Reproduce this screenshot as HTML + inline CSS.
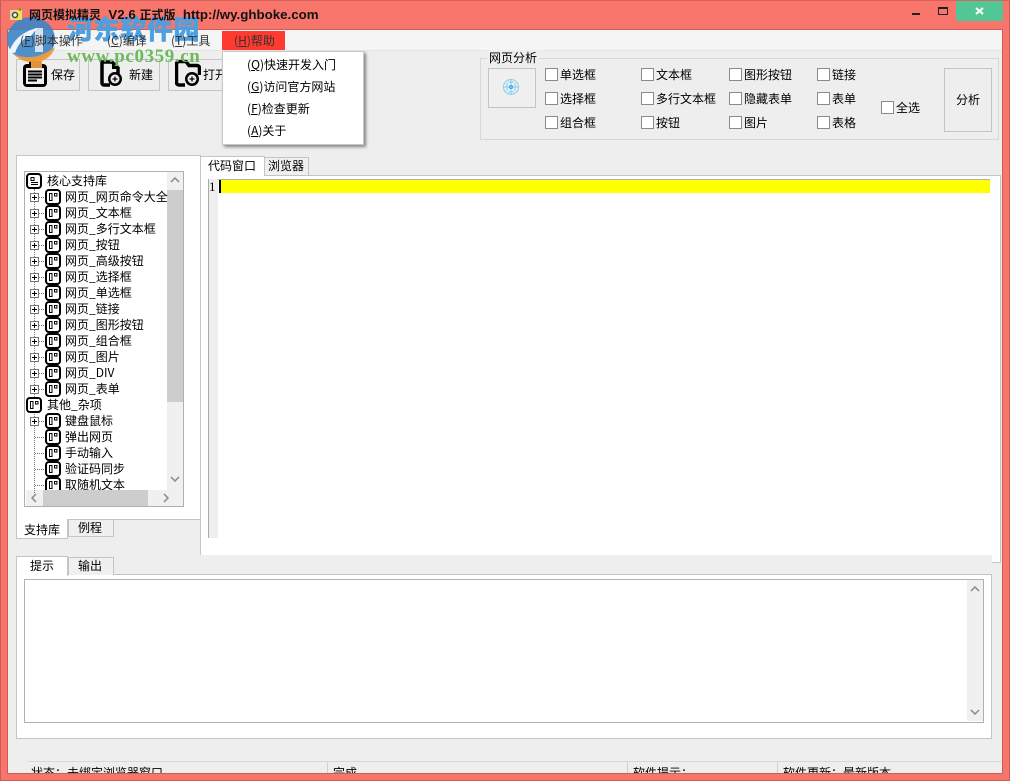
<!DOCTYPE html>
<html lang="zh"><head><meta charset="utf-8"><style>
html,body{margin:0;padding:0;width:1010px;height:781px;overflow:hidden;background:#f8756c}
*{box-sizing:border-box}
body{position:relative;font:12px/16px "WenQuanYi Zen Hei","Noto Sans CJK SC",sans-serif;color:#000}
.a,.t,.c,.ic,.p{position:absolute}
.t{white-space:nowrap;height:16px;line-height:16px}
.c{width:13px;height:13px;border:1px solid #8a8a8a;background:#fff}
.ic{width:16px;height:16px}
.p{width:9px;height:9px;left:30px;border:1px solid #777;background:#fff}
.p:before{content:"";position:absolute;left:1px;top:3px;width:5px;height:1px;background:#000}
.p:after{content:"";position:absolute;left:3px;top:1px;width:1px;height:5px;background:#000}
.h{position:absolute;left:35px;width:11px;height:0;border-top:1px dotted #777}
.btn{position:absolute;border:1px solid #c4c4c4;background:#eee}
.m{color:#333}
</style></head><body>
<svg width="0" height="0" style="position:absolute"><defs>
<symbol id="o" viewBox="0 0 16 16"><rect x="1" y="1" width="14" height="14" rx="3" fill="#fff" stroke="#000" stroke-width="2"/><rect x="4.500" y="4.500" width="2.500" height="7" fill="none" stroke="#000"/><rect x="9.500" y="4.500" width="2.500" height="2.500" fill="none" stroke="#000"/></symbol>
</defs></svg>

<div class="a" style="left:0;top:0;width:1010px;height:781px;border:1px solid #c95d58;border-top-color:#d8625c"></div>
<div class="a" style="left:7px;top:29px;width:996px;height:745px;border:1px solid #c95d58;background:#eee"></div>

<div class="a" style="left:8px;top:30px;width:994px;height:21px;background:#f5f5f5;border-bottom:1px solid #e6e6e6"></div>

<div class="btn" style="left:16px;top:59px;width:64px;height:32px"></div>
<div class="btn" style="left:88px;top:59px;width:72px;height:32px"></div>
<div class="btn" style="left:168px;top:59px;width:60px;height:32px"></div>
<svg class="a" style="left:23px;top:60px" width="24" height="27" viewBox="0 0 24 27"><rect x="0" y="4" width="24" height="23" rx="4" fill="#000"/><rect x="3" y="8" width="18" height="16" fill="#eee"/><path d="M5 11.500h14M5 14.500h14M5 17.500h14M5 20.500h9" stroke="#000" stroke-width="2"/><rect x="6" y="1" width="12" height="5" fill="#000"/></svg>
<svg class="a" style="left:100px;top:60px" width="24" height="27" viewBox="0 0 24 27"><path d="M10 25H4a2 2 0 0 1-2-2V3a2 2 0 0 1 0-1h10l6 6v7" fill="none" stroke="#000" stroke-width="3.500"/><path d="M12 2v7h7" fill="#000"/><circle cx="15" cy="19" r="7" fill="#000"/><circle cx="15" cy="19" r="4.500" fill="#eee"/><path d="M12.500 19h5M15 16.500v5" stroke="#000" stroke-width="1.300"/></svg>
<svg class="a" style="left:175px;top:60px" width="26" height="27" viewBox="0 0 26 27"><path d="M10 25H4a2.500 2.500 0 0 1-2.500-2.500V4A2.500 2.500 0 0 1 4 1.500h7l3 4h8A2.500 2.500 0 0 1 24.500 8v7" fill="none" stroke="#000" stroke-width="3.500"/><circle cx="17" cy="19" r="7" fill="#000"/><circle cx="17" cy="19" r="4.500" fill="#eee"/><path d="M14.500 19h5M17 16.500v5" stroke="#000" stroke-width="1.300"/></svg>
<div class="t" style="left:51px;top:67px">保存</div>
<div class="t" style="left:129px;top:67px">新建</div>
<div class="t" style="left:203px;top:67px">打开</div>

<!-- watermark -->
<svg class="a" style="left:0;top:0" width="70" height="72" viewBox="0 0 70 72">
<ellipse cx="31" cy="39" rx="24" ry="22" fill="#3d85c6" opacity=".9"/>
<path d="M9 52C14 38 25 31 37 28L31 36C23 38 18 44 15 53z" fill="#fff" opacity=".9"/>
<path d="M35 28h8v24h-8z" fill="#fff" opacity=".75"/>
<path d="M14 54c10 5 26 5 41-7-2 8-8 12-13 14v7H31v-6c-7 0-13-3-17-8z" fill="#ef9a3c" opacity=".95"/>
</svg>
<div class="t" style="left:67px;top:15px;height:28px;font:900 26px/28px 'Noto Sans CJK SC',sans-serif;letter-spacing:.6px;color:#4f9fdf;-webkit-text-stroke:.4px #4f9fdf">河东软件园</div>
<div class="t" style="left:67px;top:47px;height:20px;font:bold 19px/20px 'Liberation Serif',serif;color:#6cbb5a;letter-spacing:.6px">www.pc0359.cn</div>

<div class="t m" style="left:20px;top:33px">(<u>F</u>)脚本操作</div>
<div class="t m" style="left:107px;top:33px">(<u>C</u>)编译</div>
<div class="t m" style="left:171px;top:33px">(<u>T</u>)工具</div>
<div class="a" style="left:222px;top:31px;width:63px;height:19px;background:#ff3b30"></div>
<div class="t m" style="left:234px;top:33px">(<u>H</u>)帮助</div>

<svg class="a" style="left:9px;top:7px" width="15" height="15" viewBox="0 0 15 15"><rect x="1" y="3" width="12" height="10" fill="#eee24e"/><rect x="1" y="3" width="4" height="10" fill="#d8d8a0"/><circle cx="6" cy="8" r="2.500" fill="#fff" stroke="#444" stroke-width="1.500"/><rect x="10" y="1" width="2" height="3" fill="#6a9a4a"/></svg>
<div class="t" style="left:29px;top:7px;font:bold 13.300px/16px 'Liberation Sans',sans-serif;color:#111"><span style="font:bold 12px/16px 'WenQuanYi Zen Hei','Noto Sans CJK SC',sans-serif">网页模拟精灵</span>&nbsp; V2.6 <span style="font:bold 12px/16px 'WenQuanYi Zen Hei','Noto Sans CJK SC',sans-serif">正式版</span>&nbsp; http://wy.ghboke.com</div>

<div class="a" style="left:956px;top:1px;width:47px;height:20px;background:#52c795"></div>
<svg class="a" style="left:956px;top:1px" width="47" height="20"><path d="M20 7l7 6M27 7l-7 6" stroke="#fff" stroke-width="2"/></svg>
<div class="a" style="left:912px;top:13px;width:8px;height:2px;background:#222"></div>
<div class="a" style="left:938px;top:7px;width:10px;height:8px;border:1px solid #222;border-top-width:2px"></div>

<!-- dropdown -->
<div class="a" style="left:222px;top:51px;width:142px;height:94px;background:#fff;border:1px solid #c8c8c8;box-shadow:2px 2px 3px rgba(0,0,0,.45)"></div>
<div class="t" style="left:247px;top:57px">(<u>Q</u>)快速开发入门</div>
<div class="t" style="left:247px;top:79px">(<u>G</u>)访问官方网站</div>
<div class="t" style="left:247px;top:101px">(<u>F</u>)检查更新</div>
<div class="t" style="left:247px;top:123px">(<u>A</u>)关于</div>

<!-- analysis group -->
<div class="a" style="left:480px;top:58px;width:519px;height:82px;border:1px solid #d8d8d8"></div>
<div class="t" style="left:487px;top:50px;background:#eee;padding:0 2px">网页分析</div>
<div class="btn" style="left:488px;top:68px;width:48px;height:40px;background:#efefef"></div>
<svg class="a" style="left:501px;top:77px" width="20" height="20" viewBox="0 0 20 20" fill="none" stroke="#7fcdf5"><circle cx="10" cy="10" r="7.500"/><path d="M2 10h16M10 2v16M6 6v8M14 6v8M7 5h6M7 15h6"/><circle cx="10" cy="10" r="1.500" stroke="#3f9fdc"/></svg>
<div class="c" style="left:545px;top:68px"></div><div class="t" style="left:560px;top:67px">单选框</div>
<div class="c" style="left:545px;top:92px"></div><div class="t" style="left:560px;top:91px">选择框</div>
<div class="c" style="left:545px;top:116px"></div><div class="t" style="left:560px;top:115px">组合框</div>
<div class="c" style="left:641px;top:68px"></div><div class="t" style="left:656px;top:67px">文本框</div>
<div class="c" style="left:641px;top:92px"></div><div class="t" style="left:656px;top:91px">多行文本框</div>
<div class="c" style="left:641px;top:116px"></div><div class="t" style="left:656px;top:115px">按钮</div>
<div class="c" style="left:729px;top:68px"></div><div class="t" style="left:744px;top:67px">图形按钮</div>
<div class="c" style="left:729px;top:92px"></div><div class="t" style="left:744px;top:91px">隐藏表单</div>
<div class="c" style="left:729px;top:116px"></div><div class="t" style="left:744px;top:115px">图片</div>
<div class="c" style="left:817px;top:68px"></div><div class="t" style="left:832px;top:67px">链接</div>
<div class="c" style="left:817px;top:92px"></div><div class="t" style="left:832px;top:91px">表单</div>
<div class="c" style="left:817px;top:116px"></div><div class="t" style="left:832px;top:115px">表格</div>
<div class="c" style="left:881px;top:101px"></div><div class="t" style="left:896px;top:100px">全选</div>
<div class="btn" style="left:944px;top:68px;width:48px;height:64px"></div>
<div class="t" style="left:956px;top:92px">分析</div>

<!-- left panel -->
<div class="a" style="left:16px;top:155px;width:185px;height:365px;background:#fff;border:1px solid #c4c4c4"></div>
<div class="a" style="left:24px;top:171px;width:160px;height:336px;background:#fff;border:1px solid #b0b0b0;overflow:hidden">
<div class="a" style="left:142px;top:0;width:16px;height:318px;background:#f0f0f0"></div>
<div class="a" style="left:142px;top:18px;width:16px;height:212px;background:#cdcdcd"></div>
<div class="a" style="left:1px;top:318px;width:157px;height:16px;background:#f0f0f0"></div>
<div class="a" style="left:18px;top:318px;width:105px;height:16px;background:#cdcdcd"></div>
<svg class="a" style="left:0;top:0" width="158" height="334" fill="none" stroke="#888" stroke-width="1.500"><path d="M146 10l4-4 4 4M146 305l4 4 4-4M11 322l-4 4 4 4M139 322l4 4-4 4"/></svg>
</div>
<div class="a" style="left:34px;top:189px;height:304px;width:0;border-left:1px dotted #777"></div>

<svg class="ic" style="left:26px;top:173px" viewBox="0 0 16 16"><rect x="1" y="1" width="14" height="14" rx="3" fill="#fff" stroke="#000" stroke-width="2"/><path d="M5 4.500h3v3H5zM5 11.500h7" fill="none" stroke="#000"/><path d="M5 9.500h7" stroke="#000"/></svg>
<div class="t" style="left:47px;top:173px">核心支持库</div>

<div class="h" style="top:197px"></div><div class="p" style="top:193px"></div><svg class="ic" style="left:45px;top:189px"><use href="#o"/></svg><div class="t" style="left:65px;top:189px;width:103px;overflow:hidden">网页_网页命令大全</div>
<div class="h" style="top:213px"></div><div class="p" style="top:209px"></div><svg class="ic" style="left:45px;top:205px"><use href="#o"/></svg><div class="t" style="left:65px;top:205px">网页_文本框</div>
<div class="h" style="top:229px"></div><div class="p" style="top:225px"></div><svg class="ic" style="left:45px;top:221px"><use href="#o"/></svg><div class="t" style="left:65px;top:221px">网页_多行文本框</div>
<div class="h" style="top:245px"></div><div class="p" style="top:241px"></div><svg class="ic" style="left:45px;top:237px"><use href="#o"/></svg><div class="t" style="left:65px;top:237px">网页_按钮</div>
<div class="h" style="top:261px"></div><div class="p" style="top:257px"></div><svg class="ic" style="left:45px;top:253px"><use href="#o"/></svg><div class="t" style="left:65px;top:253px">网页_高级按钮</div>
<div class="h" style="top:277px"></div><div class="p" style="top:273px"></div><svg class="ic" style="left:45px;top:269px"><use href="#o"/></svg><div class="t" style="left:65px;top:269px">网页_选择框</div>
<div class="h" style="top:293px"></div><div class="p" style="top:289px"></div><svg class="ic" style="left:45px;top:285px"><use href="#o"/></svg><div class="t" style="left:65px;top:285px">网页_单选框</div>
<div class="h" style="top:309px"></div><div class="p" style="top:305px"></div><svg class="ic" style="left:45px;top:301px"><use href="#o"/></svg><div class="t" style="left:65px;top:301px">网页_链接</div>
<div class="h" style="top:325px"></div><div class="p" style="top:321px"></div><svg class="ic" style="left:45px;top:317px"><use href="#o"/></svg><div class="t" style="left:65px;top:317px">网页_图形按钮</div>
<div class="h" style="top:341px"></div><div class="p" style="top:337px"></div><svg class="ic" style="left:45px;top:333px"><use href="#o"/></svg><div class="t" style="left:65px;top:333px">网页_组合框</div>
<div class="h" style="top:357px"></div><div class="p" style="top:353px"></div><svg class="ic" style="left:45px;top:349px"><use href="#o"/></svg><div class="t" style="left:65px;top:349px">网页_图片</div>
<div class="h" style="top:373px"></div><div class="p" style="top:369px"></div><svg class="ic" style="left:45px;top:365px"><use href="#o"/></svg><div class="t" style="left:65px;top:365px">网页_DIV</div>
<div class="h" style="top:389px"></div><div class="p" style="top:385px"></div><svg class="ic" style="left:45px;top:381px"><use href="#o"/></svg><div class="t" style="left:65px;top:381px">网页_表单</div>
<div class="a" style="left:30px;top:397px;width:12px;height:16px;background:#fff"></div>
<svg class="ic" style="left:26px;top:397px"><use href="#o"/></svg><div class="t" style="left:47px;top:397px">其他_杂项</div>
<div class="h" style="top:421px"></div><div class="p" style="top:417px"></div><svg class="ic" style="left:45px;top:413px"><use href="#o"/></svg><div class="t" style="left:65px;top:413px">键盘鼠标</div>
<div class="h" style="top:437px"></div><svg class="ic" style="left:45px;top:429px"><use href="#o"/></svg><div class="t" style="left:65px;top:429px">弹出网页</div>
<div class="h" style="top:453px"></div><svg class="ic" style="left:45px;top:445px"><use href="#o"/></svg><div class="t" style="left:65px;top:445px">手动输入</div>
<div class="h" style="top:469px"></div><svg class="ic" style="left:45px;top:461px"><use href="#o"/></svg><div class="t" style="left:65px;top:461px">验证码同步</div>
<div class="h" style="top:485px"></div>
<div class="a" style="left:34px;top:477px;width:134px;height:13px;overflow:hidden"><svg class="ic" style="left:11px;top:0"><use href="#o"/></svg><div class="t" style="left:31px;top:0">取随机文本</div></div>

<!-- left tabs -->
<div class="a" style="left:68px;top:520px;width:46px;height:17px;border:1px solid #c4c4c4;border-top:0;background:#f0f0f0"></div>
<div class="t" style="left:78px;top:520px">例程</div>
<div class="a" style="left:16px;top:519px;width:52px;height:20px;background:#fff;border:1px solid #c4c4c4;border-top:0"></div>
<div class="t" style="left:24px;top:522px">支持库</div>

<!-- code area -->
<div class="a" style="left:200px;top:175px;width:801px;height:380px;background:#fff;border-left:1px solid #c4c4c4;border-top:1px solid #c4c4c4;border-right:1px solid #c4c4c4"></div>
<div class="a" style="left:992px;top:555px;width:9px;height:8px;background:#fff;border-right:1px solid #c4c4c4;border-bottom:1px solid #c4c4c4"></div>
<div class="a" style="left:200px;top:156px;width:65px;height:20px;background:#fff;border:1px solid #c4c4c4;border-bottom:0;z-index:2"></div>
<div class="a" style="left:264px;top:157px;width:45px;height:18px;background:#f0f0f0;border:1px solid #c4c4c4;border-bottom:0"></div>
<div class="t" style="left:208px;top:158px;z-index:3">代码窗口</div>
<div class="t" style="left:268px;top:158px">浏览器</div>
<div class="a" style="left:208px;top:179px;width:782px;height:1px;background:#b0b0b0"></div>
<div class="a" style="left:208px;top:179px;width:10px;height:359px;background:#eee;border-left:1px solid #a8a8a8"></div>
<div class="a" style="left:220px;top:180px;width:770px;height:13px;background:#ff0"></div>
<div class="a" style="left:219px;top:180px;width:2px;height:13px;background:#000"></div>
<div class="t" style="left:209px;top:179px;font:13px/16px 'Liberation Serif',serif">1</div>

<!-- bottom panel -->
<div class="a" style="left:16px;top:574px;width:976px;height:165px;background:#fff;border:1px solid #c4c4c4"></div>
<div class="a" style="left:16px;top:556px;width:52px;height:20px;background:#fff;border:1px solid #c4c4c4;border-bottom:0"></div>
<div class="a" style="left:68px;top:557px;width:46px;height:18px;background:#f0f0f0;border:1px solid #c4c4c4;border-bottom:0"></div>
<div class="t" style="left:30px;top:558px">提示</div>
<div class="t" style="left:78px;top:558px">输出</div>
<div class="a" style="left:24px;top:579px;width:960px;height:144px;background:#fff;border:1px solid #b0b0b0"></div>
<div class="a" style="left:967px;top:580px;width:16px;height:141px;background:#f0f0f0"></div>
<svg class="a" style="left:967px;top:580px" width="16" height="141" fill="none" stroke="#888" stroke-width="1.500"><path d="M4 11l4-4 4 4M4 130l4 4 4-4"/></svg>

<!-- status bar -->
<div class="a" style="left:28px;top:761px;width:974px;height:1px;background:#d8d8d8"></div>
<div class="a" style="left:8px;top:762px;width:994px;height:11px;overflow:hidden">
<div class="t" style="left:23px;top:3px">状态：未绑定浏览器窗口</div>
<div class="t" style="left:325px;top:3px">完成</div>
<div class="t" style="left:625px;top:3px">软件提示：</div>
<div class="t" style="left:775px;top:3px">软件更新：最新版本</div>
<div class="a" style="left:319px;top:0;width:1px;height:11px;background:#d0d0d0"></div>
<div class="a" style="left:619px;top:0;width:1px;height:11px;background:#d0d0d0"></div>
<div class="a" style="left:769px;top:0;width:1px;height:11px;background:#d0d0d0"></div>
</div>
</body></html>
